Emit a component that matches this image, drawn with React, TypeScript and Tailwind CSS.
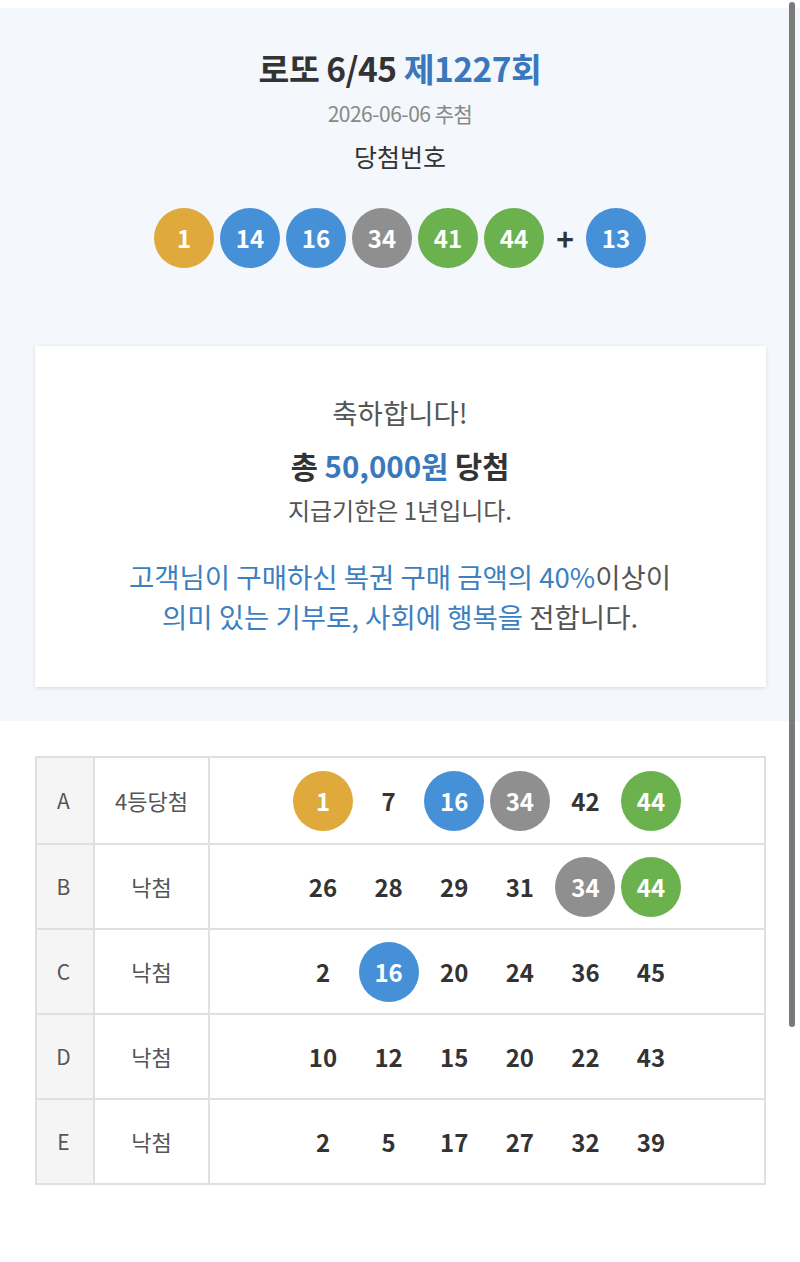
import React from "react";

type Ball = { n: number };

const ballColor = (n: number) => {
    if (n <= 10) return "bg-[#dfa93b]";
    if (n <= 20) return "bg-[#4690d8]";
    if (n <= 30) return "bg-[#e8665f]";
    if (n <= 40) return "bg-[#8f8f8f]";
    return "bg-[#6bb24f]";
};

const winning = [1, 14, 16, 34, 41, 44];
const bonus = 13;

const games = [
    { label: "A", result: "4등당첨", nums: [1, 7, 16, 34, 42, 44] },
    { label: "B", result: "낙첨", nums: [26, 28, 29, 31, 34, 44] },
    { label: "C", result: "낙첨", nums: [2, 16, 20, 24, 36, 45] },
    { label: "D", result: "낙첨", nums: [10, 12, 15, 20, 22, 43] },
    { label: "E", result: "낙첨", nums: [2, 5, 17, 27, 32, 39] },
];

const LottoBall = ({ n }: Ball) => (
    <div className={`w-[60px] h-[60px] rounded-full flex items-center justify-center text-white text-[24px] font-bold ${ballColor(n)}`}>
        {n}
    </div>
);

const App = () => {
    return (
        <div className="relative w-[800px] min-h-[1262px] bg-white pt-[8px] font-['Noto_Sans_CJK_KR','Noto_Sans',sans-serif] text-[#333]">
            <section className="bg-[#f4f7fb] pt-[40px] pb-[34px] flex flex-col items-center">
                <h1 className="text-[33.5px] leading-[40px] font-bold text-[#333] tracking-[-0.5px]">
                    로또 6/45 <span className="text-[#3a78bd]">제1227회</span>
                </h1>
                <p className="mt-[11px] text-[21px] leading-[28px] text-[#888] tracking-[-0.5px]">2026-06-06 추첨</p>
                <p className="mt-[14px] text-[25px] leading-[30px] text-[#333]">당첨번호</p>
                <div className="mt-[37px] flex items-center gap-[6px]">
                    {winning.map((n) => (
                        <LottoBall key={n} n={n} />
                    ))}
                    <span className="w-[30px] text-center text-[30px] leading-none font-bold text-[#333]">+</span>
                    <LottoBall n={bonus} />
                </div>

                <div className="mt-[78px] w-[731px] bg-white shadow-[0_1px_4px_rgba(0,0,0,0.12)] pt-[48px] pb-[51px] flex flex-col items-center">
                    <p className="text-[27.5px] leading-[36px] text-[#555]">축하합니다!</p>
                    <p className="mt-[15px] text-[29.5px] leading-[40px] font-bold text-[#333]">
                        총 <span className="text-[#3a78bd]">50,000원</span> 당첨
                    </p>
                    <p className="mt-[10px] text-[24px] leading-[30px] text-[#555]">지급기한은 1년입니다.</p>
                    <div className="mt-[31px] text-[27.5px] leading-[40px] text-center text-[#555]">
                        <p>
                            <span className="text-[#3d7fc0]">고객님이 구매하신 복권 구매 금액의 40%</span>이상이
                        </p>
                        <p>
                            <span className="text-[#3d7fc0]">의미 있는 기부로, 사회에 행복을</span> 전합니다.
                        </p>
                    </div>
                </div>
            </section>

            <div className="mt-[35px] mx-[35px] w-[731px] border-2 border-[#e0e0e0]">
                {games.map((g, i) => (
                    <div key={g.label} className={`flex h-[85px] ${i > 0 ? "border-t-2 border-[#e0e0e0]" : ""}`}>
                        <div className="w-[56px] bg-[#f5f5f5] flex items-center justify-center pr-[3px] text-[21px] text-[#555]">
                            {g.label}
                        </div>
                        <div className="w-[117px] border-x-2 border-[#e0e0e0] flex items-center justify-center text-[22px] text-[#555]">
                            {g.result}
                        </div>
                        <div className="flex-1 flex items-center justify-center">
                            {g.nums.map((n, j) => (
                                <div key={j} className="w-[65.6px] flex items-center justify-center">
                                    {winning.includes(n) ? (
                                        <LottoBall n={n} />
                                    ) : (
                                        <span className="text-[24px] font-bold text-[#333]">{n}</span>
                                    )}
                                </div>
                            ))}
                        </div>
                    </div>
                ))}
            </div>

            <div className="absolute right-[5px] top-[2px] w-[6px] h-[1025px] rounded-full bg-[#7a7a7a]" />
        </div>
    );
};

export default App;
